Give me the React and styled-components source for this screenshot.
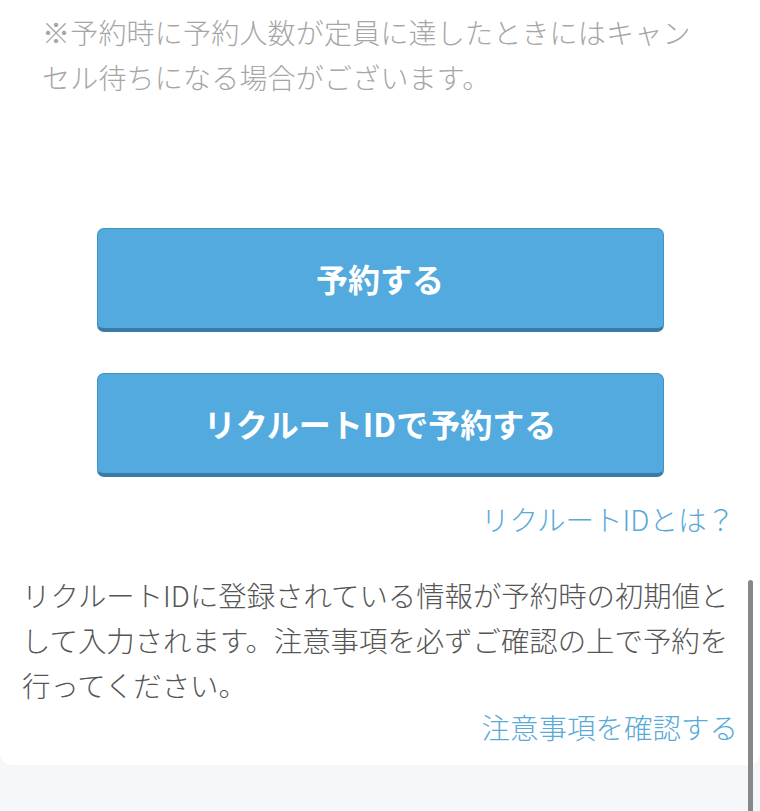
import React from "react";
import styled, { createGlobalStyle } from "styled-components";

const Global = createGlobalStyle`
  html, body { margin: 0; padding: 0; background: #f4f8fb; }
  body { font-family: "Noto Sans CJK JP", "Noto Sans", sans-serif; }
`;

const Page = styled.div`
  position: relative;
  width: 760px;
  height: 811px;
  overflow: hidden;
  background: #f4f8fb;
`;

const Card = styled.div`
  background: #ffffff;
  border-radius: 0 0 12px 12px;
  padding: 10px 0 20px;
  display: flex;
  flex-direction: column;
`;

const Note = styled.p`
  margin: 0;
  padding: 0 0 0 42px;
  font-size: 28px;
  font-weight: 300;
  letter-spacing: 0.2px;
  line-height: 45px;
  color: #a6a6a6;
  white-space: nowrap;
`;

const Buttons = styled.div`
  display: flex;
  flex-direction: column;
  align-items: center;
  gap: 41px;
  margin-top: 128px;
`;

const Button = styled.button`
  width: 567px;
  height: 104px;
  box-sizing: border-box;
  background: #52aade;
  border: 1px solid #4592c2;
  border-bottom: 4px solid #3a7ba6;
  border-radius: 7px;
  color: #ffffff;
  font-family: "Noto Sans CJK JP", "Noto Sans", sans-serif;
  font-weight: 700;
  font-size: 32px;
  padding: 0 0 2px;
  display: flex;
  align-items: center;
  justify-content: center;
  cursor: pointer;
`;

const LinkRow = styled.div`
  display: flex;
  justify-content: flex-end;
  padding-right: ${(p) => p.$right}px;
  margin-top: ${(p) => p.$top}px;
`;

const TextLink = styled.a`
  font-size: 28.5px;
  font-weight: 300;
  line-height: ${(p) => p.$lh}px;
  color: #5aaad8;
  text-decoration: none;
  white-space: nowrap;
`;

const Body = styled.p`
  margin: 31px 0 0;
  padding: 0 0 0 22px;
  font-size: 28.4px;
  font-weight: 300;
  line-height: 45px;
  color: #555555;
  white-space: nowrap;
`;

const Scrollbar = styled.div`
  position: absolute;
  left: 748px;
  top: 580px;
  width: 5px;
  height: 240px;
  border-radius: 3px;
  background: #888888;
`;

export default function App() {
  return (
    <>
      <Global />
      <Page>
        <Card>
          <Note>
            ※予約時に予約人数が定員に達したときにはキャン
            <br />
            セル待ちになる場合がございます。
          </Note>
          <Buttons>
            <Button>予約する</Button>
            <Button>リクルートIDで予約する</Button>
          </Buttons>
          <LinkRow $right={25} $top={19}>
            <TextLink $lh={45}>リクルートIDとは？</TextLink>
          </LinkRow>
          <Body>
            リクルートIDに登録されている情報が予約時の初期値と
            <br />
            して入力されます。注意事項を必ずご確認の上で予約を
            <br />
            行ってください。
          </Body>
          <LinkRow $right={22} $top={2}>
            <TextLink $lh={36}>注意事項を確認する</TextLink>
          </LinkRow>
        </Card>
        <Scrollbar />
      </Page>
    </>
  );
}
